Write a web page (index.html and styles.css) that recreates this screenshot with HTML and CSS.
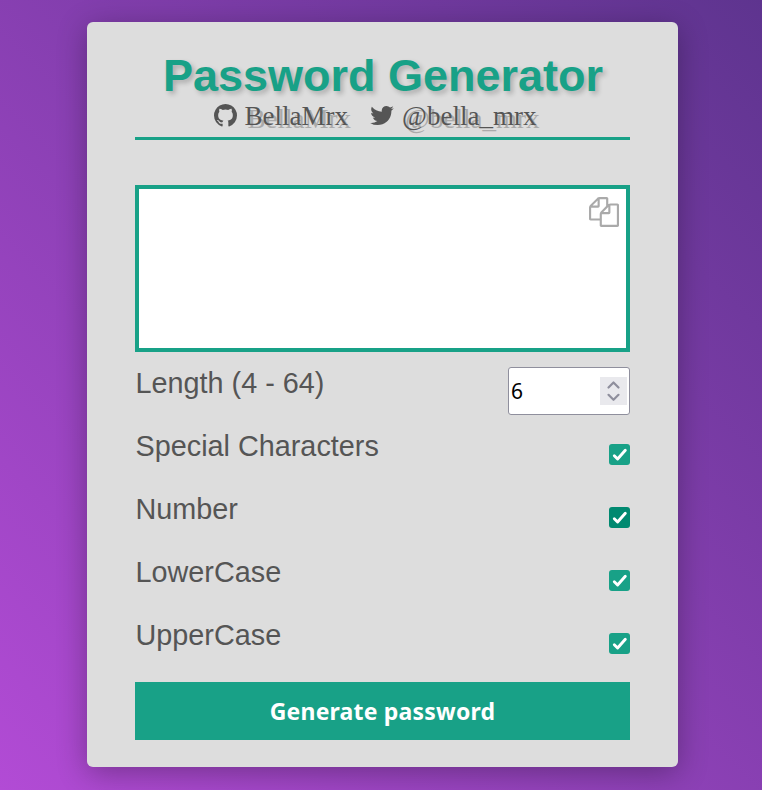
FILE: index.html
```html
<!DOCTYPE html>
<html lang="en">
<head>
<meta charset="utf-8">
<title>Password Generator</title>
<link rel="stylesheet" href="styles.css">
</head>
<body>
<main class="card">
  <header class="header">
    <h1 class="title">Password Generator</h1>
    <div class="authors">
      <a class="author"><svg class="github" viewBox="128 128 1536 1536"><path d="M896 128q209 0 385.500 103t279.500 279.500 103 385.500q0 251-146.500 451.500t-378.500 277.500q-27 5-40-7t-13-30q0-3 .5-76.500t.5-134.500q0-97-52-142 57-6 102.500-18t94-39 81-66.500 53-105 20.500-150.500q0-119-79-206 37-91-8-204-28-9-81 11t-92 44l-38 24q-93-26-192-26t-192 26q-16-11-42.500-27t-83.500-38.500-85-13.500q-45 113-8 204-79 87-79 206 0 85 20.500 150t52.500 105 80.500 67 94 39 102.500 18q-39 36-49 103-21 10-45 15t-57 5-65.500-21.500-55.500-62.500q-19-32-48.500-52t-49.500-24l-20-3q-21 0-29 4.500t-5 11.500 9 14 13 12l7 5q22 10 43.500 38t31.500 51l10 23q13 38 44 61.500t67 30 69.500 7 55.500-3.500l23-4q0 38 .5 88.500t.5 54.500q0 18-13 30t-40 7q-232-77-378.500-277.500t-146.500-451.500q0-209 103-385.500t279.500-279.500 385.500-103z"/></svg><span>BellaMrx</span></a>
      <a class="author"><svg class="twitter" viewBox="108 128 1576 1536"><path d="M1684 408q-67 98-162 167 1 14 1 42 0 130-38 259.500t-115.500 248.500-184.500 210.500-258 146-323 54.500q-271 0-496-145 35 4 78 4 225 0 401-138-105-2-188-64.500t-114-159.500q33 5 61 5 43 0 85-11-112-23-185.500-111.500t-73.500-205.500v-4q68 38 146 41-66-44-105-115t-39-154q0-88 44-163 121 149 294.500 238.500t371.500 99.500q-8-38-8-74 0-134 94.500-228.500t228.500-94.500q140 0 236 102 109-21 205-78-37 115-142 178 93-10 186-50z"/></svg><span>@bella_mrx</span></a>
    </div>
  </header>
  <section class="output">
    <svg class="copy" viewBox="0 0 1792 1792"><path d="M1696 384q40 0 68 28t28 68v1216q0 40-28 68t-68 28h-960q-40 0-68-28t-28-68v-288h-544q-40 0-68-28t-28-68v-672q0-40 20-88t48-76l408-408q28-28 76-48t88-20h416q40 0 68 28t28 68v328q68-40 128-40h416zm-544 213l-299 299h299v-299zm-640-384l-299 299h299v-299zm196 647l316-316v-416h-384v416q0 40-28 68t-68 28h-416v640h512v-256q0-40 20-88t48-76zm956 804v-1152h-384v416q0 40-28 68t-68 28h-416v640h896z"/></svg>
  </section>
  <section class="settings">
    <div class="row"><span class="label">Length (4 - 64)</span>
      <div class="number"><span>6</span><svg class="spinner" viewBox="0 0 27 28"><path d="M8.500 10.500l5-5 5 5M8.500 17.800l5 5 5-5"/></svg></div></div>
    <div class="row"><span class="label">Special Characters</span><svg class="check" viewBox="0 0 21 21"><path d="M5.300 11.700l3.300 3.300 7.700-8.700"/></svg></div>
    <div class="row"><span class="label">Number</span><svg class="check check-hover" viewBox="0 0 21 21"><path d="M5.300 11.700l3.300 3.300 7.700-8.700"/></svg></div>
    <div class="row"><span class="label">LowerCase</span><svg class="check" viewBox="0 0 21 21"><path d="M5.300 11.700l3.300 3.300 7.700-8.700"/></svg></div>
    <div class="row"><span class="label">UpperCase</span><svg class="check" viewBox="0 0 21 21"><path d="M5.300 11.700l3.300 3.300 7.700-8.700"/></svg></div>
  </section>
  <button class="generate">Generate password</button>
</main>
</body>
</html>
```
FILE: styles.css
```css
* { box-sizing: border-box; }
body {
  margin: 0;
  height: 790px;
  padding: 22px 0 0 87px;
  overflow: hidden;
  background: linear-gradient(45deg, #b24bd5, #5e348f);
  font-family: "Liberation Sans", Arial, sans-serif;
  color: #555;
}
.card {
  width: 591px;
  height: 745px;
  padding: 27px 48px;
  border-radius: 6px;
  background: #ddd;
  box-shadow: 0 6px 30px rgba(0, 0, 0, .3);
}
.header {
  height: 91px;
  border-bottom: 3px solid #18a187;
  text-align: center;
}
.title {
  margin: 0;
  padding-left: 1px;
  font-size: 45px;
  line-height: 53px;
  color: #18a187;
  white-space: nowrap;
  text-shadow: 3px 3px 5px rgba(0, 0, 0, .22);
}
.authors {
  display: flex;
  justify-content: center;
  gap: 22px;
  padding-right: 15px;
  font: 27px/28px "Liberation Serif", "Times New Roman", serif;
  text-shadow: 3px 3px 0 #aaa;
}
.author { display: flex; gap: 8px; }
.github, .twitter { height: 23px; margin-top: 2px; fill: #555; }
.github { width: 23px; }
.twitter { width: 24px; }
.output {
  height: 167px;
  margin-top: 45px;
  border: 4px solid #18a187;
  padding: 8px 7px;
  display: flex;
  justify-content: flex-end;
  background: #fff;
}
.copy { width: 30px; height: 30px; fill: #aaa; }
.settings { margin-top: 15px; }
.row {
  height: 63px;
  display: flex;
  justify-content: space-between;
}
.label { padding-left: .5px; font-size: 28.800px; line-height: 33px; }
.number {
  width: 122px;
  height: 48px;
  padding: 0 2px;
  border: 1px solid #8f8f9d;
  border-radius: 3px;
  display: flex;
  align-items: center;
  justify-content: space-between;
  background: #fff;
  color: #000;
  font: 21px/28px "Noto Sans", sans-serif;
}
.spinner {
  width: 27px;
  height: 28px;
  background: #e9e9ed;
  fill: none;
  stroke: #8f8f9d;
  stroke-width: 2.200;
  stroke-linecap: round;
  stroke-linejoin: round;
}
.check {
  width: 21px;
  height: 21px;
  margin-top: 13.500px;
  border-radius: 3px;
  background: #18a187;
  fill: none;
  stroke: #fff;
  stroke-width: 2.900;
  stroke-linecap: round;
  stroke-linejoin: round;
}
.check-hover { background: #008970; }
.generate {
  display: block;
  width: 100%;
  height: 58px;
  border: 0;
  padding: 0;
  background: #18a187;
  color: #fff;
  font: bold 23px/58px "Noto Sans", sans-serif;
  letter-spacing: .2px;
}
```
